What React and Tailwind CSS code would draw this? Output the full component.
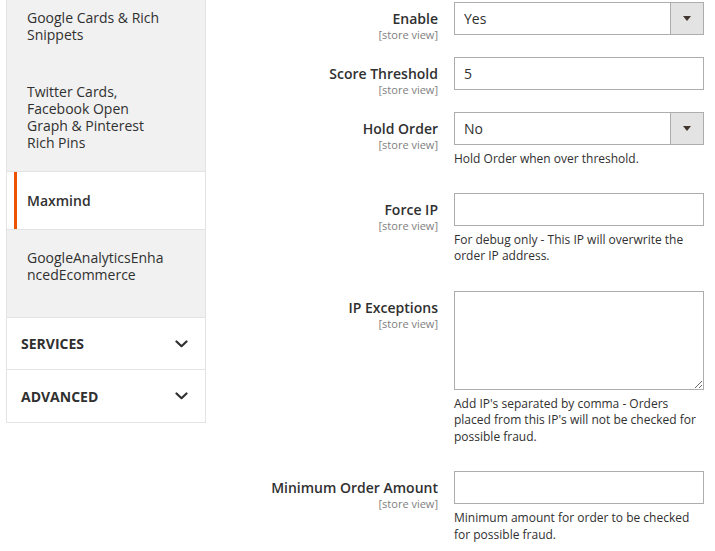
import React from 'react';

const navItems = [
  { lines: ['Google Cards & Rich', 'Snippets'], className: 'pt-[9px] pb-[20px]' },
  { lines: ['Twitter Cards,', 'Facebook Open', 'Graph & Pinterest', 'Rich Pins'], className: 'pt-[20px] pb-[20px]' },
  { lines: ['Maxmind'], active: true, className: 'py-[20px]' },
  { lines: ['GoogleAnalyticsEnha', 'ncedEcommerce'], className: 'pt-[19px] pb-[34px]' },
];

function Chevron() {
  return (
    <svg width="13" height="8" viewBox="0 0 13 8" fill="none">
      <path d="M1.5 1.5L6.5 6.2L11.5 1.5" stroke="#303030" strokeWidth="2.2" strokeLinecap="round" strokeLinejoin="round" />
    </svg>
  );
}

function SelectBox({ value }) {
  return (
    <div className="flex h-[33px] border border-[#adadad] bg-white">
      <div className="flex-1 flex items-center pl-[9px] text-[14px] text-[#303030]">{value}</div>
      <div className="w-[33px] flex items-center justify-center bg-[#e3e3e3] border-l border-[#adadad]">
        <svg width="8" height="5" viewBox="0 0 8 5">
          <path d="M0 0H8L4 5Z" fill="#41362f" />
        </svg>
      </div>
    </div>
  );
}

function TextBox({ value = '' }) {
  return (
    <div className="flex items-center h-[33px] border border-[#adadad] bg-white pl-[9px] text-[14px] text-[#303030]">
      {value}
    </div>
  );
}

function Row({ label, children, hint, pb }) {
  return (
    <div className="flex items-start">
      <div className="flex-1 text-right pt-[9px]">
        <div className="text-[14px] leading-[16px] font-semibold text-[#303030]">{label}</div>
        <div className="mt-[1px] text-[11px] leading-[13px] text-[#808080]">[store view]</div>
      </div>
      <div className={`w-[250px] ml-4 ${pb}`}>
        {children}
        {hint && (
          <div className="mt-[6px] text-[12px] leading-[16.5px] text-[#303030]">
            {hint.map((l) => (
              <div key={l}>{l}</div>
            ))}
          </div>
        )}
      </div>
    </div>
  );
}

export default function App() {
  return (
    <div className="flex bg-white w-[715px] h-[551px] overflow-hidden" style={{ fontFamily: '"Open Sans", sans-serif' }}>
      <div className="ml-[6px] w-[200px] self-start border-x border-b border-[#e3e3e3]">
        <div className="bg-[#f1f1f1]">
          {navItems.map((item) => (
            <div
              key={item.lines[0]}
              className={
                item.active
                  ? 'bg-white border-y border-[#e3e3e3] pl-[7px]'
                  : 'pl-[7px]'
              }
            >
              <div
                className={`border-l-[3px] pl-[10px] text-[14px] leading-[17px] text-[#303030] whitespace-nowrap ${item.className} ${
                  item.active ? 'border-[#eb5202] font-semibold' : 'border-transparent'
                }`}
              >
                {item.lines.map((l, i) => (
                  <React.Fragment key={l}>
                    {i > 0 && <br />}
                    {l}
                  </React.Fragment>
                ))}
              </div>
            </div>
          ))}
        </div>
        <div className="flex items-center justify-between h-[52px] pl-[14px] pr-[17px] border-t border-[#e3e3e3] bg-white">
          <span className="text-[14px] font-bold text-[#303030]">SERVICES</span>
          <Chevron />
        </div>
        <div className="flex items-center justify-between h-[53px] pl-[14px] pr-[17px] border-t border-[#e3e3e3] bg-white">
          <span className="text-[14px] font-bold text-[#303030]">ADVANCED</span>
          <Chevron />
        </div>
      </div>

      <div className="flex-1 pr-[11px] pt-[2px]">
        <Row label="Enable" pb="pb-[22px]">
          <SelectBox value="Yes" />
        </Row>
        <Row label="Score Threshold" pb="pb-[22px]">
          <TextBox value="5" />
        </Row>
        <Row label="Hold Order" pb="pb-[25px]" hint={['Hold Order when over threshold.']}>
          <SelectBox value="No" />
        </Row>
        <Row label="Force IP" pb="pb-[26px]" hint={['For debug only - This IP will overwrite the', 'order IP address.']}>
          <TextBox />
        </Row>
        <Row
          label="IP Exceptions"
          pb="pb-[26px]"
          hint={["Add IP's separated by comma - Orders", "placed from this IP's will not be checked for", 'possible fraud.']}
        >
          <textarea className="block w-full h-[99px] border border-[#adadad] bg-white outline-none" />
        </Row>
        <Row label="Minimum Order Amount" pb="pb-[20px]" hint={['Minimum amount for order to be checked', 'for possible fraud.']}>
          <TextBox />
        </Row>
      </div>
    </div>
  );
}
